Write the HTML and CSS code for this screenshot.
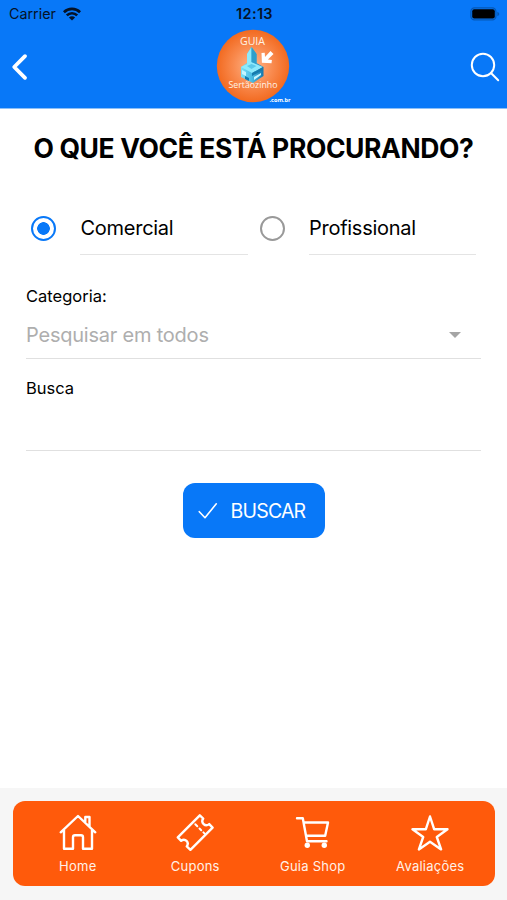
FILE: index.html
```html
<!DOCTYPE html>
<html lang="pt-BR">
<head>
<meta charset="utf-8">
<meta name="viewport" content="width=device-width, initial-scale=1">
<title>Guia Sertãozinho</title>
<link rel="stylesheet" href="styles.css">
</head>
<body>
<div class="app">
  <header class="header">
    <div class="status">
      <div class="status-left">
        <span class="carrier">Carrier</span>
        <svg class="wifi" viewBox="0 0 18 14" width="18" height="14"><g fill="none" stroke="#051327" stroke-width="2.7"><path d="M.9 5.200a11.500 11.500 0 0 1 16.200 0"/><path d="M3.800 8.400a7.400 7.400 0 0 1 10.400 0"/></g><path fill="#051327" d="M9 13.600 5.900 10.500a4.400 4.400 0 0 1 6.200 0z"/></svg>
      </div>
      <span class="clock">12:13</span>
      <div class="status-right">
        <svg viewBox="0 0 30 14" width="30" height="14"><rect x=".9" y=".9" width="25" height="12" rx="3.6" fill="none" stroke="#0558b5" stroke-width="1.3"/><rect x="2.2" y="2.2" width="22.6" height="9.4" rx="2" fill="#000"/><path fill="#0558b5" d="M27.3 4.8q2 .7 2 2.2t-2 2.200z"/></svg>
      </div>
    </div>
    <div class="toolbar">
      <svg class="back" viewBox="0 0 18 28" width="18" height="28"><path d="M14 3.200 3.200 14 14 24.800" fill="none" stroke="#fff" stroke-width="3.800" stroke-linecap="round" stroke-linejoin="round"/></svg>
      <svg class="logo" viewBox="0 0 76 76" width="76" height="76">
        <defs>
          <radialGradient id="disc"><stop offset="0" stop-color="#ffb68c"/><stop offset=".55" stop-color="#f98a4e"/><stop offset="1" stop-color="#f26a20"/></radialGradient>
          <linearGradient id="ice" x1="0" x2="1"><stop offset="0" stop-color="#79e1f7"/><stop offset=".5" stop-color="#48b9e2"/><stop offset="1" stop-color="#1477ae"/></linearGradient>
        </defs>
        <circle cx="37" cy="37" r="36.200" fill="url(#disc)"/>
        <path fill="url(#ice)" d="M25 38l6-4v-9l4.500-7 5 7v9l7 4v9L37 54l-12-6z"/>
        <path fill="#8eeafc" d="M31 25l4.500-7v17l-4.500 2zM25 38l10-5 12 5-11 6z"/>
        <path fill="#2e9fcb" d="M35.500 18l5 7v10l-5-2z"/>
        <path fill="#167bad" d="M36 44l11-6v3l-11 6zM29 47l4 2v3l-4-2z"/>
        <path fill="#5cc9ea" d="M31 37l4.500-2 5 2-5 3z"/>
        <path fill="#c5f5ff" d="M26 41l4 2v4l-4-2zM38 48l7-4v2l-7 5z"/>
        <path fill="#fff" d="M45.500 24l3.200-.3.300 4.400 5.500-6 3 2.800-5.600 5.600 4 .5-.4 3.300-9.600-.5z"/>
        <text x="24" y="15.500" class="logo-guia" textLength="25" lengthAdjust="spacingAndGlyphs">GUIA</text>
        <text x="12.500" y="58.500" class="logo-name" textLength="49" lengthAdjust="spacingAndGlyphs">Sertãozinho</text>
        <text x="53.500" y="72.500" class="logo-domain" textLength="21" lengthAdjust="spacingAndGlyphs">.com.br</text>
      </svg>
      <svg class="search" viewBox="0 0 30 30" width="30" height="30"><g fill="none" stroke="#fff" stroke-width="2" stroke-linecap="round"><circle cx="13" cy="13" r="11.200"/><path d="m21 21 7.200 7.200"/></g></svg>
    </div>
  </header>

  <main class="content">
    <h1 class="title">O QUE VOCÊ ESTÁ PROCURANDO?</h1>
    <div class="options">
      <div class="option">
        <span class="radio radio-on"></span>
        <span class="option-label">Comercial</span>
      </div>
      <div class="option">
        <span class="radio"></span>
        <span class="option-label">Profissional</span>
      </div>
    </div>
    <div class="field">
      <span class="field-label">Categoria:</span>
      <div class="field-value"><span>Pesquisar em todos</span><i class="caret"></i></div>
    </div>
    <div class="field">
      <span class="field-label">Busca</span>
      <div class="field-value"></div>
    </div>
    <button class="submit">
      <svg viewBox="0 0 20 18" width="20" height="18"><path d="m1.300 9.700 5.700 6L18.300 1.800" fill="none" stroke="#fff" stroke-width="1.600" stroke-linecap="round" stroke-linejoin="round"/></svg>
      <span>BUSCAR</span>
    </button>
  </main>

  <footer class="footer">
    <nav class="tabs">
      <div class="tab">
        <svg viewBox="0 0 38 38" width="38" height="38"><path d="M1.700 18.300 19 2l17.300 16.300M5 16v18.700h9V23.200q0-2 2-2h6q2 0 2 2v11.500h9V16M26.300 7.500V3h4.200v9.500"/></svg>
        <span>Home</span>
      </div>
      <div class="tab">
        <svg viewBox="0 0 38 38" width="38" height="38"><path d="M1.800 23.300 23.800 1.300l3.400 3.200c-2.800 4.400 2 8.600 6 5.600l3.400 3.500-22.200 22.200-3.600-3.400c2.800-4.200-1.600-8.400-5.600-5.600z"/><path class="perforation" d="m19.300 10.300 2 2m2.200 2.200 1.700 1.700m2.200 2.200 1.500 1.500"/></svg>
        <span>Cupons</span>
      </div>
      <div class="tab">
        <svg viewBox="0 0 38 38" width="38" height="38"><path d="M3 4.300h5.800L13 27.200h19.500M9.700 8.500H34l-2.800 13.200H12.200"/><g class="solid"><circle cx="13.300" cy="31.200" r="2.700"/><circle cx="30.300" cy="31.200" r="2.700"/></g></svg>
        <span>Guia Shop</span>
      </div>
      <div class="tab">
        <svg viewBox="0 0 38 38" width="38" height="38"><path d="m19 2.500 4.200 12.800h13.300L25.800 23l4.300 12.400L19 27.800 7.900 35.400 12.200 23 1.500 15.300h13.300z"/></svg>
        <span>Avaliações</span>
      </div>
    </nav>
  </footer>
</div>
</body>
</html>
```
FILE: styles.css
```css
* { box-sizing: border-box; }
body {
  margin: 0;
  background: #fff;
  font-family: Inter, "Liberation Sans", sans-serif;
  color: #000;
}
.app { display: flex; flex-direction: column; height: 900px; overflow: hidden; }
.header { height: 109px; background: #0878f8; border-bottom: 1px solid #8cc0f8; }
.status {
  display: grid;
  grid-template-columns: 1fr auto 1fr;
  align-items: center;
  height: 27px;
  padding: 0 7px 0 9px;
  color: #051327;
}
.status-left { display: flex; align-items: center; gap: 7px; }
.wifi { display: block; }
.carrier { font-size: 14.300px; }
.clock { font-size: 14.500px; font-weight: 600; letter-spacing: 0.350px; }
.status-right { display: flex; justify-content: flex-end; }
.status-right svg { display: block; }
.toolbar {
  display: grid;
  grid-template-columns: 1fr auto 1fr;
  align-items: center;
  height: 78px;
  margin-top: 1px;
  padding: 0 7px 0 11px;
}
.logo { display: block; overflow: visible; margin: 0 4px 0 0; }
.search { justify-self: end; }
.logo text { font-family: "Open Sans", sans-serif; fill: #fff3e6; }
.logo-guia { font-size: 11px; }
.logo-name { font-size: 9.500px; }
.logo .logo-domain { font-size: 6px; font-weight: 700; fill: #fff; }

.content { flex: 1; padding: 0 26px; display: flex; flex-direction: column; }
.title {
  margin: 21px -10px 0;
  line-height: 36px;
  text-align: center;
  font-size: 26.500px;
  font-weight: 700;
  letter-spacing: -0.400px;
  white-space: nowrap;
}
.options { display: flex; margin-top: 36px; gap: 12px; padding: 0 5px 0 5px; }
.option { display: flex; flex: 1; gap: 24px; }
.radio {
  flex: none;
  width: 25px;
  height: 25px;
  margin-top: 14px;
  border: 2px solid #999;
  border-radius: 50%;
}
.radio-on {
  border: 2.500px solid #0878f8;
  background: radial-gradient(circle, #0878f8 0 6px, #fff 6.600px);
}
.option-label {
  flex: 1;
  height: 53px;
  line-height: 52px;
  padding-left: 0.500px;
  border-bottom: 1px solid #e4e4e4;
  font-size: 20px;
  letter-spacing: -0.270px;
}
.field { height: 92px; border-bottom: 1px solid #e0e0e0; }
.options + .field { height: 104px; padding-top: 12px; }
.field-label { display: block; padding-top: 19px; line-height: 20px; font-size: 16.500px; }
.field-value {
  display: flex;
  align-items: center;
  justify-content: space-between;
  height: 48px;
  padding: 10px 20px 0 0;
  font-size: 20px;
  letter-spacing: -0.220px;
  color: #aeaeae;
}
.caret { border: 6px solid transparent; border-top-color: #a5a5a5; border-bottom: 0; }
.submit {
  display: flex;
  align-items: center;
  align-self: center;
  gap: 13px;
  width: 142px;
  height: 55px;
  margin-top: 32px;
  padding: 0 0 0 15px;
  border: 0;
  border-radius: 12px;
  background: #0878f8;
  color: #fff;
  font-family: inherit;
  font-size: 19.500px;
  letter-spacing: -0.800px;
}
.footer { height: 112px; padding: 13px 12px 0 13px; background: #f6f6f6; }
.tabs {
  display: flex;
  height: 85px;
  padding: 0 6px;
  border-radius: 12px;
  background: #ff5a0b;
}
.tab {
  display: flex;
  flex: 1;
  flex-direction: column;
  align-items: center;
  padding-top: 13px;
  color: #fff1e8;
  font-size: 13px;
  line-height: 16px;
  letter-spacing: 0.250px;
}
.tab svg { display: block; margin-bottom: 6px; fill: none; stroke: #fff; stroke-width: 2.400; stroke-linejoin: round; stroke-linecap: round; }
.tab .perforation { stroke-width: 2; }
.tab .solid { fill: #fff; stroke: none; }
```
